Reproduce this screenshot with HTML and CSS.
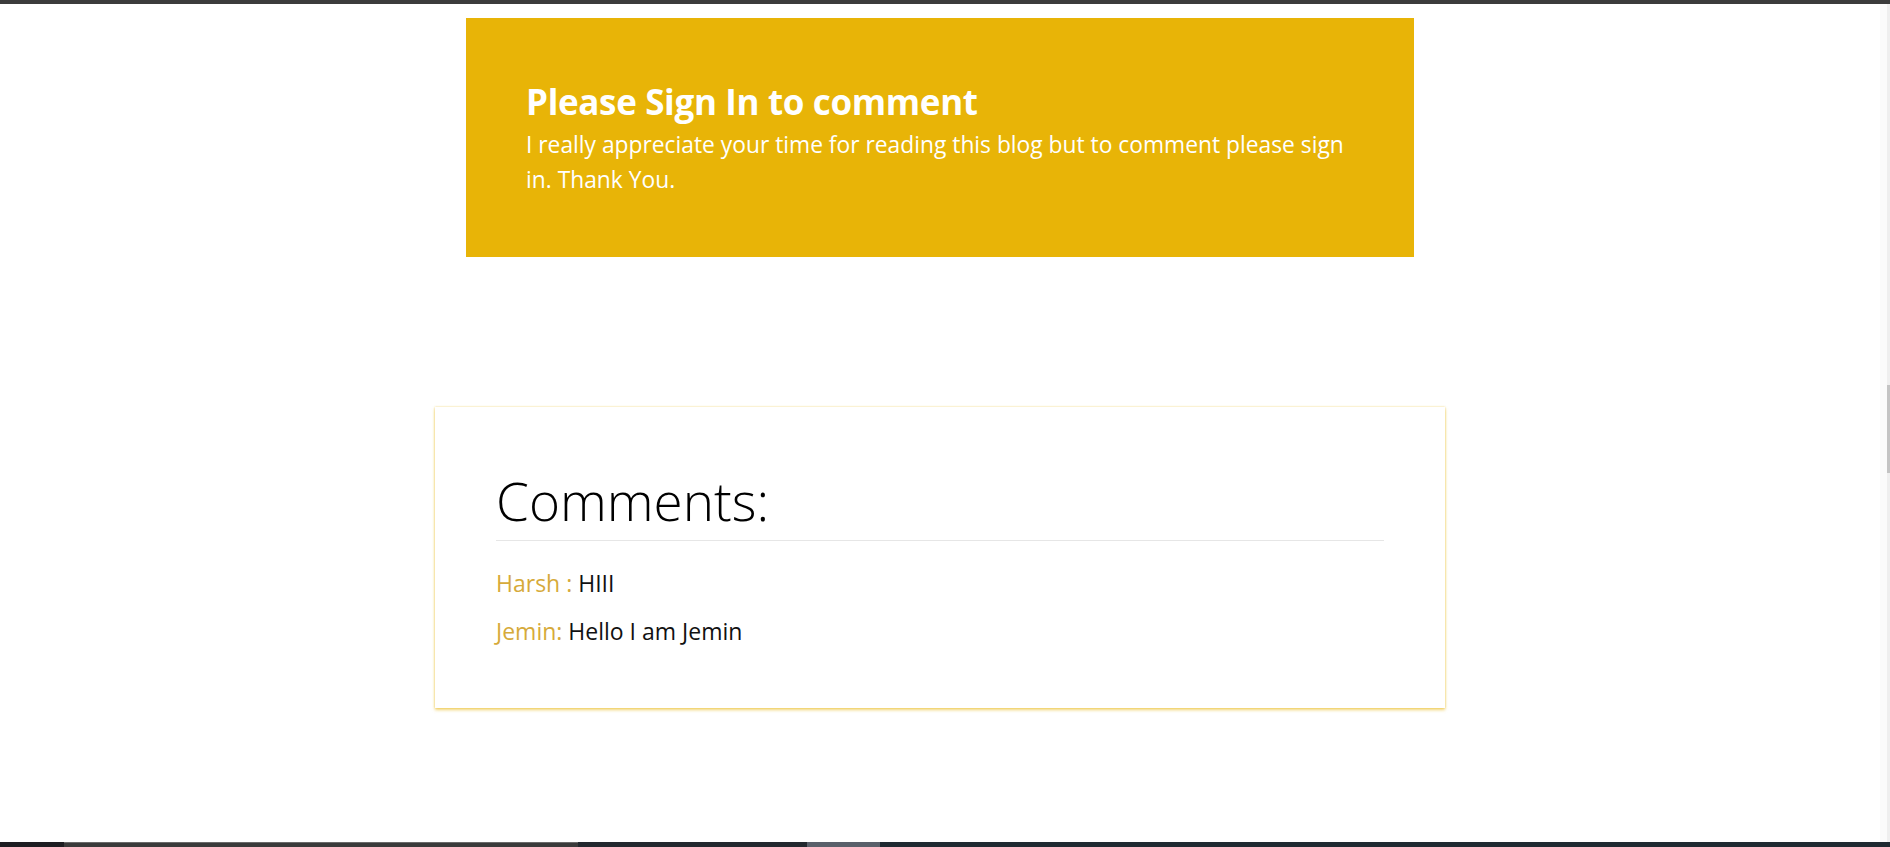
FILE: index.html
```html
<!DOCTYPE html>
<html lang="en">
<head>
<meta charset="utf-8">
<title>Comments</title>
<link rel="stylesheet" href="styles.css">
</head>
<body>
<div class="screen">
  <div class="topbar"></div>
  <div class="middle">
    <main class="page">
      <section class="signin">
        <h2 class="signin-title">Please Sign In to comment</h2>
        <p class="signin-text">I really appreciate your time for reading this blog but to comment please sign in. Thank You.</p>
      </section>
      <section class="comments">
        <h1 class="comments-title">Comments:</h1>
        <hr class="comments-rule">
        <p class="comment"><span class="comment-name">Harsh :</span> HIII</p>
        <p class="comment"><span class="comment-name">Jemin:</span> Hello I am Jemin</p>
      </section>
    </main>
    <div class="scrollbar"><div class="scroll-track"><div class="scroll-thumb"></div></div></div>
  </div>
  <div class="taskbar">
    <div class="tb tb-a"></div>
    <div class="tb tb-b"></div>
    <div class="tb tb-c"></div>
    <div class="tb tb-d"></div>
    <div class="tb tb-e"></div>
  </div>
</div>
</body>
</html>
```

FILE: styles.css
```css
* { box-sizing: border-box; }
html, body { margin: 0; padding: 0; background: #fff; }
body { font-family: "Open Sans", "Noto Sans", sans-serif; color: #111; }

.screen { height: 847px; display: flex; flex-direction: column; overflow: hidden; }
.topbar { height: 4px; background: #3c3c3c; flex: none; }
.middle { flex: 1; display: flex; min-height: 0; }
.page { flex: 1; padding-top: 14px; }
.scrollbar { width: 10px; background: #fbfbfb; display: flex; justify-content: flex-end; }
.scroll-track { width: 3px; background: #efefef; padding-top: 381px; }
.scroll-thumb { height: 88px; background: #c4c4c4; }

.taskbar { height: 5px; flex: none; display: flex; }
.tb { height: 100%; }
.tb-a { width: 64px; background: #1d1d21; }
.tb-b { width: 514px; background: #3a3a3a; border-top: 1px solid #6a6a6a; }
.tb-c { width: 229px; background: #22282e; }
.tb-d { width: 73px; background: #59606a; }
.tb-e { flex: 1; background: #1f2a31; }

.signin {
  width: 948px; margin: 0 auto; padding: 63px 60px 60px;
  background: #e8b407; color: #fff;
}
.signin-title { margin: 0; font-size: 35px; font-weight: 700; line-height: 42px; letter-spacing: -0.35px; }
.signin-text { margin: 4px 0 0; font-size: 22.8px; line-height: 35px; }

.comments {
  width: 1010px; margin: 150px auto 0; padding: 62px 61px 60px;
  background: #fff;
  box-shadow: 0 0 2px rgba(232, 180, 7, 0.45), 0 2px 3px rgba(232, 180, 7, 0.55);
}
.comments-title { margin: 0; font-size: 53px; font-weight: 300; line-height: 63.6px; color: #000; }
.comments-rule { margin: 7px 0 25px; border: 0; border-top: 1px solid #e6e6e6; }
.comment { margin: 0 0 13.5px; font-size: 23px; line-height: 34.5px; color: #111; }
.comment:last-child { margin-bottom: 0; }
.comment-name { color: #d6aa3a; }
```
